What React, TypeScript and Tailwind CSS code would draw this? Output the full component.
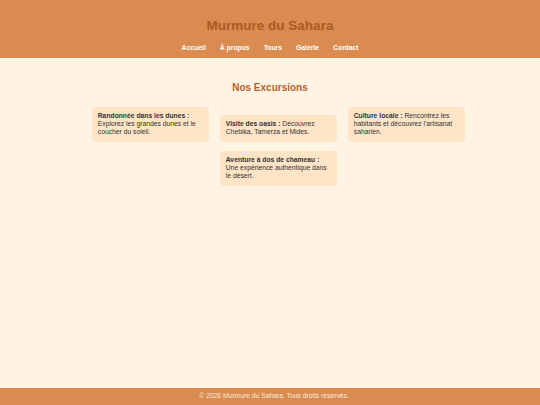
const excursions = [
  { title: "Randonnée dans les dunes :", text: "Explorez les grandes dunes et le coucher du soleil." },
  { title: "Visite des oasis :", text: "Découvrez Chebika, Tamerza et Mides." },
  { title: "Culture locale :", text: "Rencontrez les habitants et découvrez l'artisanat saharien." },
  { title: "Aventure à dos de chameau :", text: "Une expérience authentique dans le désert." },
];

const navLinks = ["Accueil", "À propos", "Tours", "Galerie", "Contact"];

const App = () => {
  return (
    <div className="flex min-h-[405px] flex-col bg-[#fff3e4] font-['Liberation_Sans',Arial,sans-serif]">
      <header className="flex h-[57.5px] flex-col items-center bg-[#d98b50] pt-[16.5px]">
        <h1 className="text-[13.5px] font-bold leading-[18px] text-[#ad5a26]">
          Murmure du Sahara
        </h1>
        <nav className="mt-[9px] flex gap-[14px]">
          {navLinks.map((link) => (
            <a key={link} className="text-[6.8px] font-bold leading-[8px] text-white">
              {link}
            </a>
          ))}
        </nav>
      </header>

      <main className="flex flex-1 flex-col items-center">
        <h2 className="mt-[23px] text-[10px] font-bold leading-[14px] text-[#b8622c]">
          Nos Excursions
        </h2>
        <div className="mt-[12px] flex w-[396px] flex-wrap items-end justify-center gap-x-[10.5px] gap-y-[9px] pl-[17px]">
          {excursions.map((item) => (
            <div
              key={item.title}
              className="w-[117.5px] rounded-[4px] bg-[#ffe4c6] px-[6px] pb-[6px] pt-[5px] text-[6.75px] leading-[8px] text-[#333]"
            >
              <strong>{item.title}</strong> {item.text}
            </div>
          ))}
        </div>
      </main>

      <footer className="flex h-[17px] items-center justify-center bg-[#d98b50] pl-[8px] text-[6.75px] text-[#fbeade]">
        © 2026 Murmure du Sahara. Tous droits réservés.
      </footer>
    </div>
  );
};

export default App;
